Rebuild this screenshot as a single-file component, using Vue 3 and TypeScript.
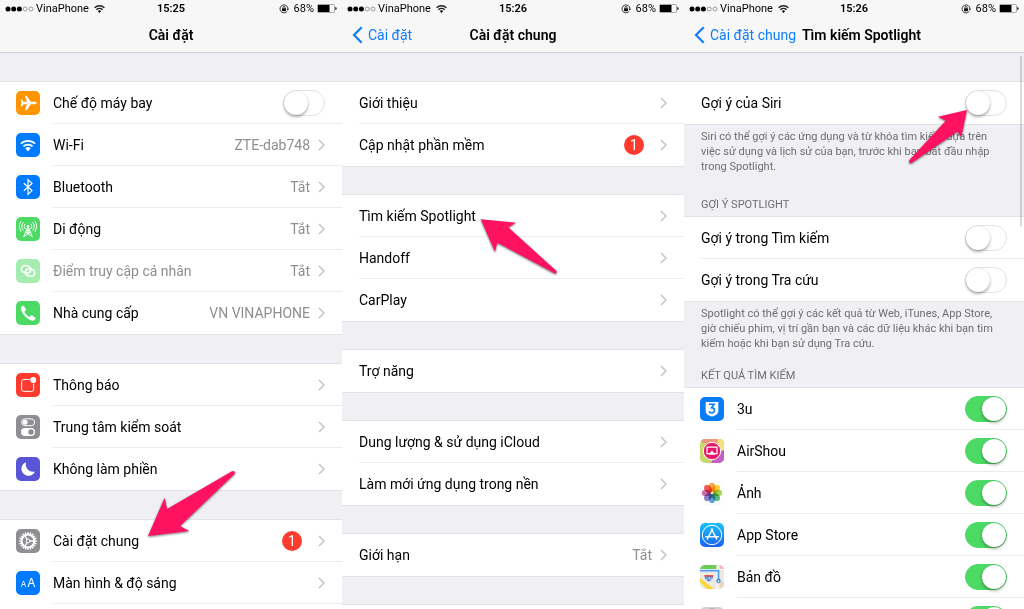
<script setup lang="ts">
interface Row {
  label: string
  icon?: string
  value?: string
  badge?: number
  toggle?: boolean
  on?: boolean
  muted?: boolean
}
interface Group {
  header?: string
  rows: Row[]
  footer?: string[]
}
interface Screen {
  id: string
  time: string
  title: string
  back?: string
  scrollbar?: boolean
  groups: Group[]
}

const petals = ['#f7941d', '#f9c80e', '#9acb3b', '#3fae6a', '#3f8fd0', '#7a6cc0', '#c0559c', '#ef4136']
  .map((c, i) => `<ellipse cx="12" cy="6.4" rx="3.3" ry="4.6" fill="${c}" fill-opacity=".85" transform="rotate(${i * 45} 12 12)" style="mix-blend-mode:multiply"/>`)
  .join('')

const teeth = Array.from({ length: 20 }, (_, i) =>
  `<path d="M12 3v2.2" stroke="#fff" stroke-width="1.3" transform="rotate(${i * 18} 12 12)"/>`).join('')

const icons: Record<string, string> = {
  plane: '<rect width="24" height="24" rx="5" fill="#ff9500"/><path fill="#fff" d="M20.6 12c0-.9-1-1.3-2-1.3h-3.8L10.6 4.7H8.9l2 6H7.5L6 8.8H4.6l.9 3.2-.9 3.2H6l1.5-1.9h3.4l-2 6h1.7l4.2-6h3.8c1 0 2-.4 2-1.3z"/>',
  wifi: '<rect width="24" height="24" rx="5" fill="#007aff"/><g fill="none" stroke="#fff" stroke-width="1.8"><path d="M4.9 10.7a10.2 10.2 0 0 1 14.2 0"/><path d="M7.4 13.4a6.6 6.6 0 0 1 9.2 0"/></g><path fill="#fff" d="M9.3 15.4a3.9 3.9 0 0 1 5.4 0L12 18.2z"/>',
  bluetooth: '<rect width="24" height="24" rx="5" fill="#007aff"/><path fill="none" stroke="#fff" stroke-width="1.2" d="M7.8 8.2l8.2 7.4-4 3.8V4.6l4 3.8-8.2 7.4"/>',
  cellular: '<rect width="24" height="24" rx="5" fill="#4cd964"/><g fill="none" stroke="#fff" stroke-width="1"><path d="M12 9.2L7.6 20M12 9.2L16.4 20M10.4 13h3.2M9.6 15.2h4.8l-6 4.2M9.6 15.2l6 4.2M12 9.5v6"/><path d="M9.3 12a3.7 3.7 0 0 1 0-5.2M14.7 12a3.7 3.7 0 0 0 0-5.2M7.4 13.5a6 6 0 0 1 0-8.2M16.6 13.5a6 6 0 0 0 0-8.2M5.3 14.8a8.6 8.6 0 0 1 0-10.8M18.7 14.8a8.6 8.6 0 0 0 0-10.8"/></g><circle cx="12" cy="9.3" r="1.3" fill="#fff"/>',
  hotspot: '<rect width="24" height="24" rx="5" fill="#a5ecb1"/><g fill="none" stroke="#fff" stroke-width="1.6"><rect x="5.400" y="6.800" width="9.600" height="6.800" rx="3.400" transform="rotate(12 10.200 10.200)"/><rect x="9.200" y="10.200" width="9.600" height="6.800" rx="3.400" transform="rotate(12 14 13.600)"/></g>',
  phone: '<rect width="24" height="24" rx="5" fill="#4cd964"/><path fill="#fff" d="M6.6 4.8c-1.7.8-2 2.4-1.4 4.3 1.3 4.3 5.3 8.4 9.6 10.2 1.8.7 3.6.4 4.5-1.2.4-.7.2-1.2-.3-1.6l-2.7-2c-.6-.4-1.1-.3-1.6.2l-.8.9c-.4.4-.8.4-1.2.1-1.6-1.1-3-2.5-4-4.2-.3-.5-.3-.8.1-1.2l.9-.8c.5-.4.6-.9.2-1.5L8.1 5.2c-.4-.6-.9-.7-1.5-.4z"/>',
  notify: '<rect width="24" height="24" rx="5" fill="#ff3b30"/><path fill="none" stroke="#fff" stroke-width="1" d="M13.6 6.5H7.7a2 2 0 0 0-2 2v7.9a2 2 0 0 0 2 2h8a2 2 0 0 0 2-2v-5.9"/><circle cx="17.2" cy="6.9" r="3" fill="#fff"/>',
  control: '<rect width="24" height="24" rx="5" fill="#8e8e93"/><rect x="5.6" y="3.9" width="13" height="6.8" rx="3.4" fill="none" stroke="#fff" stroke-width="1"/><circle cx="9.1" cy="7.3" r="2.5" fill="#fff"/><rect x="5" y="13" width="14" height="8" rx="4" fill="#fff"/><circle cx="15" cy="17" r="2.7" fill="#8e8e93"/>',
  moon: '<rect width="24" height="24" rx="5" fill="#5856d6"/><path fill="#fff" d="M10.2 5.2a7 7 0 1 0 8.7 9.3A7.2 7.2 0 0 1 10.2 5.2z"/>',
  gear: `<rect width="24" height="24" rx="5" fill="#8e8e93"/>${teeth}<g fill="none" stroke="#fff"><circle cx="12" cy="12" r="6.400" stroke-width="2"/><circle cx="12" cy="12" r="1.900" stroke-width="1"/><path stroke-width="1.300" d="M13.800 12h5M11.100 10.400L8.400 6M11.100 13.600L8.400 18"/></g>`,
  display: '<rect width="24" height="24" rx="5" fill="#007aff"/><g fill="#fff" font-family="Inter, sans-serif" text-anchor="middle"><text x="7.600" y="16" font-size="8">A</text><text x="15.400" y="16" font-size="12">A</text></g>',
  threeu: '<rect width="24" height="24" rx="5" fill="#087cf5"/><path fill="#fff" d="M5.700 5h12.600v9.200c0 2.700-3.200 4.600-6.300 5.200-3.100-.6-6.300-2.500-6.300-5.200z"/><path fill="none" stroke="#087cf5" stroke-width="1.500" d="M9 7.200h5.200l-2.700 3.500c1.900 0 3 1 3 2.500 0 1.700-1.200 2.700-2.800 2.700-1.400 0-2.300-.6-2.800-1.500"/>',
  airshou: '<clipPath id="as"><rect width="24" height="24" rx="5"/></clipPath><g clip-path="url(#as)"><rect width="24" height="24" fill="#c5d96c"/><path d="M0 0h24v9L3 4z" fill="#f0967c"/><path d="M18 0h6v15l-8-3z" fill="#f3e37a"/><path d="M24 11v13H11l5-10z" fill="#c65fc4"/></g><circle cx="12" cy="12" r="8.700" fill="#e5186c" stroke="#fff" stroke-width="1"/><path fill="none" stroke="#fff" stroke-width="1.200" d="M9.500 14.600H7V8.200h10v6.400h-2.500"/><path fill="#fff" d="M12 11.500l3.600 4.300H8.400z"/>',
  photos: `<rect x=".25" y=".25" width="23.500" height="23.500" rx="5" fill="#fff" stroke="#eee" stroke-width=".5"/>${petals}`,
  appstore: '<linearGradient id="ap" x2="0" y2="1"><stop stop-color="#1bc4fa"/><stop offset="1" stop-color="#1b62ec"/></linearGradient><rect width="24" height="24" rx="5" fill="url(#ap)"/><circle cx="12" cy="12" r="9.700" fill="none" stroke="#fff" stroke-width="1"/><path fill="none" stroke="#fff" stroke-width="1.400" d="M12.700 5.600L7 16.600M11.300 5.600L17 16.600M5.200 13.700h13.600"/>',
  maps: '<clipPath id="mp"><rect width="24" height="24" rx="5"/></clipPath><g clip-path="url(#mp)"><rect width="24" height="24" fill="#eee9dc"/><path d="M0 0h17v4H0z" fill="#6ecb54"/><path d="M20 0h4v4h-4z" fill="#f3b5c4"/><path d="M20 17h4v7h-4z" fill="#e5d9c0"/><path d="M0 13l14 11H7L0 17z" fill="#fcd535"/><path d="M17 0v24M0 4.500h24" stroke="#fff" stroke-width="1"/><path d="M0 5.700h18.500V15" fill="none" stroke="#4aa0f5" stroke-width="1.700"/><circle cx="18.500" cy="16" r="2.200" fill="#2b7de0"/><path d="M18.500 14.600l1.100 2.600h-2.200z" fill="#fff"/><path d="M4.500 10.300h8.600c.6 3-1.300 5.200-4.300 6.400-3-1.200-4.900-3.400-4.300-6.400z" fill="#2f79d8" stroke="#fff" stroke-width=".5"/><path d="M4.500 10h8.600v1.700H4.500z" fill="#e45555"/><text x="8.800" y="14.700" font-family="Inter, sans-serif" font-size="3.500" fill="#fff" text-anchor="middle">280</text></g>',
  next: '<rect width="24" height="24" rx="5" fill="#d2d2d4"/><circle cx="12" cy="8" r="7" fill="#aeb0b4"/>'
}

const screens: Screen[] = [
  {
    id: 'settings', time: '15:25', title: 'Cài đặt',
    groups: [
      { rows: [
        { label: 'Chế độ máy bay', icon: 'plane', toggle: true },
        { label: 'Wi-Fi', icon: 'wifi', value: 'ZTE-dab748' },
        { label: 'Bluetooth', icon: 'bluetooth', value: 'Tắt' },
        { label: 'Di động', icon: 'cellular', value: 'Tắt' },
        { label: 'Điểm truy cập cá nhân', icon: 'hotspot', value: 'Tắt', muted: true },
        { label: 'Nhà cung cấp', icon: 'phone', value: 'VN VINAPHONE' }
      ] },
      { rows: [
        { label: 'Thông báo', icon: 'notify' },
        { label: 'Trung tâm kiểm soát', icon: 'control' },
        { label: 'Không làm phiền', icon: 'moon' }
      ] },
      { rows: [
        { label: 'Cài đặt chung', icon: 'gear', badge: 1 },
        { label: 'Màn hình & độ sáng', icon: 'display' },
        { label: '', icon: 'next' }
      ] }
    ]
  },
  {
    id: 'general', time: '15:26', title: 'Cài đặt chung', back: 'Cài đặt',
    groups: [
      { rows: [{ label: 'Giới thiệu' }, { label: 'Cập nhật phần mềm', badge: 1 }] },
      { rows: [{ label: 'Tìm kiếm Spotlight' }, { label: 'Handoff' }, { label: 'CarPlay' }] },
      { rows: [{ label: 'Trợ năng' }] },
      { rows: [{ label: 'Dung lượng & sử dụng iCloud' }, { label: 'Làm mới ứng dụng trong nền' }] },
      { rows: [{ label: 'Giới hạn', value: 'Tắt' }] },
      { rows: [{ label: '' }] }
    ]
  },
  {
    id: 'spotlight', time: '15:26', title: 'Tìm kiếm Spotlight', back: 'Cài đặt chung', scrollbar: true,
    groups: [
      {
        rows: [{ label: 'Gợi ý của Siri', toggle: true }],
        footer: ['Siri có thể gợi ý các ứng dụng và từ khóa tìm kiếm dựa trên', 'việc sử dụng và lịch sử của bạn, trước khi bạn bắt đầu nhập', 'trong Spotlight.']
      },
      {
        header: 'GỢI Ý SPOTLIGHT',
        rows: [{ label: 'Gợi ý trong Tìm kiếm', toggle: true }, { label: 'Gợi ý trong Tra cứu', toggle: true }],
        footer: ['Spotlight có thể gợi ý các kết quả từ Web, iTunes, App Store,', 'giờ chiếu phim, vị trí gần bạn và các dữ liệu khác khi bạn tìm', 'kiếm hoặc khi bạn sử dụng Tra cứu.']
      },
      {
        header: 'KẾT QUẢ TÌM KIẾM',
        rows: [
          { label: '3u', icon: 'threeu', toggle: true, on: true },
          { label: 'AirShou', icon: 'airshou', toggle: true, on: true },
          { label: 'Ảnh', icon: 'photos', toggle: true, on: true },
          { label: 'App Store', icon: 'appstore', toggle: true, on: true },
          { label: 'Bản đồ', icon: 'maps', toggle: true, on: true },
          { label: '', icon: 'next', toggle: true, on: true }
        ]
      }
    ]
  }
]
</script>

<template>
  <main class="board">
    <section v-for="s in screens" :key="s.id" class="phone" :class="s.id">
      <div class="status">
        <div class="carrier">
          <svg class="dots" width="29" height="6" viewBox="0 0 29 6">
            <circle cx="3" cy="3" r="2.500" /><circle cx="8.700" cy="3" r="2.500" /><circle cx="14.400" cy="3" r="2.500" />
            <circle cx="20.200" cy="3" r="2" class="hollow" /><circle cx="26" cy="3" r="2" class="hollow" />
          </svg>
          <span>VinaPhone</span>
          <svg class="signal" width="11" height="8" viewBox="0 0 11 8">
            <path class="arc" d="M.6 2.800a7 7 0 0 1 9.800 0M2.400 4.700a4.400 4.400 0 0 1 6.200 0" />
            <path d="M3.900 6.100a2.300 2.300 0 0 1 3.200 0L5.500 7.900z" />
          </svg>
        </div>
        <time>{{ s.time }}</time>
        <div class="power">
          <svg class="lock" width="10" height="10" viewBox="0 0 10 10">
            <path class="ring" d="M8.200 7.300A4 4 0 1 1 9 4.800" /><path d="M7.600 4.700h2.400L8.800 6.400z" />
            <rect x="3.100" y="4.300" width="3.800" height="2.900" /><path class="ring" d="M3.900 4.500V3.600a1.100 1.100 0 0 1 2.200 0v.9" />
          </svg>
          <span>68%</span>
          <svg width="20" height="9" viewBox="0 0 20 9">
            <rect class="cell" x=".5" y=".5" width="17" height="8" rx="1" /><rect x="1" y="1" width="11.500" height="7" />
            <path d="M18.300 3c1 .3 1.300.8 1.300 1.500s-.3 1.200-1.300 1.500z" />
          </svg>
        </div>
      </div>
      <nav class="nav">
        <a v-if="s.back" class="back" href="#">
          <svg width="11" height="18" viewBox="0 0 11 18"><path d="M9.700 1.200L2 9l7.700 7.800" /></svg>
          <span>{{ s.back }}</span>
        </a>
        <span v-else></span>
        <h1>{{ s.title }}</h1>
      </nav>

      <div class="content">
        <div v-for="(g, gi) in s.groups" :key="gi" class="section">
          <h2 v-if="g.header" class="header">{{ g.header }}</h2>
          <div class="group">
            <component
              :is="r.toggle ? 'label' : 'a'"
              v-for="(r, ri) in g.rows"
              :key="ri"
              class="row"
              :class="{ muted: r.muted }"
              :href="r.toggle ? undefined : '#'"
            >
              <svg v-if="r.icon" class="icon" width="24" height="24" viewBox="0 0 24 24" v-html="icons[r.icon]"></svg>
              <span class="body">
                <span class="label">{{ r.label }}</span>
                <span v-if="r.value" class="value">{{ r.value }}</span>
                <span v-if="r.badge" class="badge">{{ r.badge }}</span>
                <input v-if="r.toggle" type="checkbox" class="switch" :checked="r.on">
                <svg v-else class="chevron" width="7" height="12" viewBox="0 0 7 12"><path d="M1 1l5 5-5 5" /></svg>
              </span>
            </component>
          </div>
          <p v-if="g.footer" class="footer">
            <span v-for="line in g.footer" :key="line">{{ line }}</span>
          </p>
        </div>
      </div>

      <div v-if="s.scrollbar" class="scrollbar"></div>
      <svg v-if="s.id === 'settings'" class="arrow" width="90" height="68" viewBox="147 470 90 68">
        <path d="M148 536L164.700 497.700 167 509 231.500 471.500Q235 470 235 473.500L180 526 189.300 531z" />
      </svg>
      <svg v-if="s.id === 'general'" class="arrow" width="78" height="58" viewBox="480 218 78 58">
        <path d="M480.700 219.300L516 222.700 508.300 227.300 556.500 271Q557 274 555 273.500L497.300 242.700 495 252z" />
      </svg>
      <svg v-if="s.id === 'spotlight'" class="arrow" width="60" height="56" viewBox="908 109 60 56">
        <path d="M967 110L938 116.700 945.700 120.700 909 160.500Q909 164 911.500 163L957.500 131.500 961.300 137z" />
      </svg>
    </section>
  </main>
</template>

<style>
body {
  margin: 0;
}
</style>

<style scoped>
.board {
  display: grid;
  grid-template-columns: 171fr 171fr 170fr;
  height: 100vh;
  overflow: hidden;
  font-family: Roboto, Inter, "Liberation Sans", sans-serif;
  font-size: 14px;
  color: #000;
}
.phone {
  --gap: 27px;
  position: relative;
  min-width: 0;
  overflow: hidden;
  background: #efeff4;
}
.settings {
  --gap: 28px;
}
.status {
  display: grid;
  grid-template-columns: 1fr auto 1fr;
  align-items: center;
  height: 17px;
  padding: 0 5px;
  background: #f7f7f7;
  font-size: 11px;
  line-height: 17px;
}
.carrier,
.power {
  display: flex;
  align-items: center;
}
.carrier {
  gap: 2px;
}
.signal {
  margin-left: 3px;
}
.power {
  justify-content: flex-end;
  gap: 3px;
}
.lock {
  margin-right: 2px;
}
.hollow,
.ring,
.arc,
.cell {
  fill: none;
  stroke: #222;
}
.hollow {
  stroke: #777;
  stroke-width: 0.7;
}
.ring {
  stroke-width: 0.9;
}
.arc {
  stroke-width: 1.4;
}
.cell {
  stroke: #888;
  stroke-width: 0.7;
}
time {
  font-weight: 600;
}
.nav {
  display: grid;
  grid-template-columns: 1fr auto 1fr;
  align-items: center;
  box-sizing: border-box;
  height: 36px;
  border-bottom: 1px solid #d2d2d6;
  background: #f7f7f7;
}
.back {
  display: flex;
  align-items: center;
  gap: 5px;
  padding: 0 6px 0 10px;
  color: #0f7dfb;
  text-decoration: none;
  white-space: nowrap;
}
.back path {
  fill: none;
  stroke: currentColor;
  stroke-width: 2.2;
}
h1 {
  margin: 0;
  font-size: 14px;
  font-weight: 600;
  white-space: nowrap;
}
.group {
  margin-top: var(--gap);
  border-top: 1px solid #e2e2e7;
  border-bottom: 1px solid #e2e2e7;
  background: #fff;
}
.section:first-child .group {
  margin-top: 28px;
}
.row {
  display: flex;
  align-items: center;
  height: 42px;
  padding-left: 17px;
  color: inherit;
  text-decoration: none;
}
.icon {
  flex: none;
  margin: 0 13px 0 -1px;
}
.body {
  display: flex;
  flex: 1;
  align-items: center;
  box-sizing: border-box;
  height: 42px;
  padding-right: 17px;
  border-bottom: 1px solid #ececef;
}
.row:last-child .body {
  border-bottom-color: transparent;
}
.label {
  flex: 1;
  white-space: nowrap;
}
.value {
  margin-right: 8px;
  color: #8e8e93;
}
.muted .label {
  color: #8e8e93;
}
.badge {
  width: 20px;
  height: 20px;
  margin-right: 16px;
  border-radius: 50%;
  background: #ff3b30;
  color: #fff;
  line-height: 20px;
  text-align: center;
}
.chevron path {
  fill: none;
  stroke: #c4c4c9;
  stroke-width: 1.5;
}
.switch {
  flex: none;
  box-sizing: border-box;
  width: 42px;
  height: 26px;
  margin: 0;
  appearance: none;
  border: 1px solid #e3e3e3;
  border-radius: 13px;
  background: #fff;
}
.switch::before {
  content: "";
  display: block;
  width: 24px;
  height: 24px;
  border-radius: 50%;
  background: #fff;
  box-shadow: 0 2px 3px rgba(0, 0, 0, 0.3), 0 0 1px rgba(0, 0, 0, 0.2);
}
.switch:checked {
  border-color: #4cd964;
  background: #4cd964;
}
.switch:checked::before {
  margin-left: 16px;
}
.header {
  margin: 0;
  padding: 23px 17px 4px;
  color: #6d6d72;
  font-size: 11px;
  font-weight: 400;
  line-height: 15px;
}
.section:nth-child(3) .header {
  padding-top: 17px;
}
.header + .group {
  margin-top: 0;
}
.footer {
  margin: 0;
  padding: 4px 0 0 17px;
  color: #6d6d72;
  font-size: 11px;
  line-height: 15px;
  white-space: nowrap;
}
.footer span {
  display: block;
}
.scrollbar {
  position: absolute;
  top: 56px;
  right: 2px;
  width: 2px;
  height: 171px;
  border-radius: 1px;
  background: rgba(0, 0, 0, 0.14);
}
.arrow {
  position: absolute;
  overflow: visible;
  filter: drop-shadow(0 1px 1px rgba(0, 0, 0, 0.55));
}
.arrow path {
  fill: #ff1361;
}
.settings .arrow {
  top: 470px;
  left: 147px;
}
.general .arrow {
  top: 218px;
  left: 138px;
}
.spotlight .arrow {
  top: 109px;
  left: 224px;
}
</style>
